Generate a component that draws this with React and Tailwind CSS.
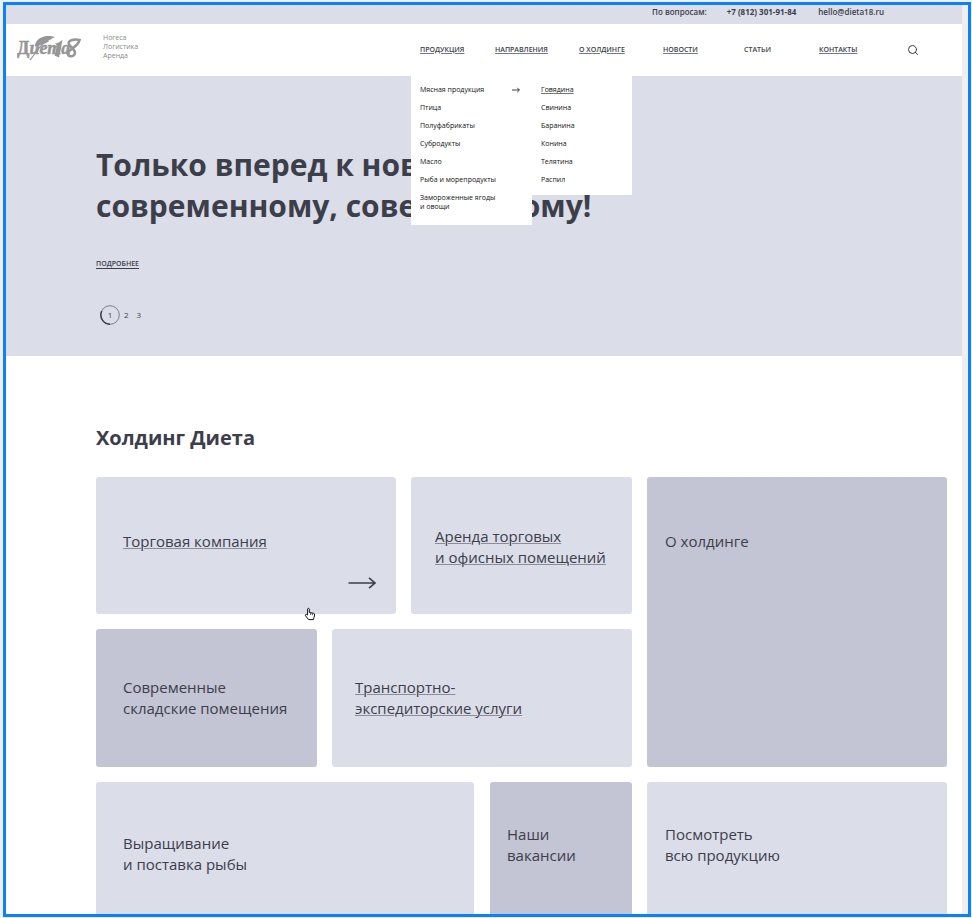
import { Search } from 'lucide-react';

const navItems = [
  { label: 'Продукция', underline: true },
  { label: 'Направления', underline: true },
  { label: 'О холдинге', underline: true },
  { label: 'Новости', underline: true },
  { label: 'Статьи', underline: false },
  { label: 'Контакты', underline: true },
];

const categories = [
  'Мясная продукция',
  'Птица',
  'Полуфабрикаты',
  'Субродукты',
  'Масло',
  'Рыба и морепродукты',
];

const meats = ['Говядина', 'Свинина', 'Баранина', 'Конина', 'Телятина', 'Распил'];

function Logo() {
  return (
    <a href="#" aria-label="Диета18" className="block">
      <svg viewBox="0 0 66 28" className="w-[66px] h-7 text-[#969696]" fill="currentColor">
        {/* Feather */}
        <path d="M18 9C19 4 24 0.5 30 0C34 -0.2 38 0.5 37.5 1.5C34 2 36 3.2 31 4.6C33.5 4.8 31 6.4 27 8L18 10.5Z" />
        <path d="M13 24C19 17 23 8 32 3" fill="none" stroke="currentColor" strokeWidth="1.2" />
        {/* Digits */}
        <path d="M38 7.5C41 7 43.5 5.5 45.5 4L42 21.5L37.5 19.5L40 9.5Z" />
        <path
          d="M62.5 4C57 2.5 50 4.5 52 8.5C54 12 60 14.5 57.5 18.5C55.5 21.5 50 20.5 51 17C52 13 61 11 62.5 4Z"
          fill="none"
          stroke="currentColor"
          strokeWidth="2.6"
        />
        <text x="0" y="18" fontSize="18" fontWeight="700" fontFamily="Liberation Serif, serif" stroke="currentColor" strokeWidth="0.5">
          Д<tspan fontStyle="italic">иета</tspan>
        </text>
      </svg>
    </a>
  );
}

function ProductMenu() {
  return (
    <div className="absolute top-full -left-[9px] z-10 flex items-start text-[7px] leading-[9px] text-[#111]">
      <ul className="w-[121px] bg-white flex flex-col gap-[9px] px-[9px] pt-[9px] pb-[14px]">
        {categories.map((name, i) => (
          <li key={name} className="flex items-center justify-between pr-[3px]">
            <a href="#" className="whitespace-nowrap">{name}</a>
            {i === 0 && (
              <svg viewBox="0 0 8 6" className="w-2 h-1.5" fill="none" stroke="currentColor" strokeWidth="0.8">
                <path d="M0 3H7.4M5.2 0.8L7.4 3L5.2 5.2" />
              </svg>
            )}
          </li>
        ))}
        <li>
          <a href="#">Замороженные ягоды<br />и овощи</a>
        </li>
      </ul>
      <ul className="w-[100px] bg-white flex flex-col gap-[9px] px-[9px] pt-[9px] pb-[11px]">
        {meats.map((name, i) => (
          <li key={name}>
            <a href="#" className={i === 0 ? 'underline decoration-[#777] underline-offset-1' : ''}>{name}</a>
          </li>
        ))}
      </ul>
    </div>
  );
}

function Header() {
  return (
    <header>
      <div className="h-[19px] bg-[#dbdde9] flex justify-end items-center pr-[78px] pb-[5px] text-[8px] leading-[10px] font-semibold">
        <span className="mr-5">По вопросам:</span>
        <a href="tel:+78123019184" className="mr-[22px] font-bold">+7 (812) 301-91-84</a>
        <a href="mailto:hello@dieta18.ru">hello@dieta18.ru</a>
      </div>
      <div className="h-[52px] bg-white flex items-center pl-[11px] pr-[43px]">
        <Logo />
        <p className="ml-5 mb-2 text-[7px] leading-[9px] font-medium text-[#8a8a8a]">
          Horeca<br />Логистика<br />Аренда
        </p>
        <nav className="ml-auto h-full grid grid-cols-[75px_84px_84px_81px_75px_88px] text-[7px] font-semibold uppercase">
          {navItems.map((item, i) => (
            <div key={item.label} className="relative h-full flex items-center">
              <a href="#" className={item.underline ? 'underline decoration-[#777985] underline-offset-1' : ''}>{item.label}</a>
              {i === 0 && <div className="normal-case font-medium"><ProductMenu /></div>}
            </div>
          ))}
        </nav>
        <button aria-label="Поиск">
          <Search size={12} strokeWidth={2} />
        </button>
      </div>
    </header>
  );
}

function Hero() {
  return (
    <section className="bg-[#dbdde9] h-[280px] pl-[90px] pt-[68px]">
      <h1 className="text-[30px] leading-[41px] font-bold">
        Только вперед к новому,<br />современному, совершенному!
      </h1>
      <a href="#" className="mt-[33px] inline-block border-b border-current text-[7px] leading-[9px] font-semibold uppercase">
        Подробнее
      </a>
      <div className="mt-[33px] ml-1 flex items-center text-[8px]">
        <button className="relative w-5 h-5 mr-1">
          <svg viewBox="0 0 20 20" className="absolute inset-0 w-5 h-5" fill="none" stroke="currentColor">
            <circle cx="10" cy="10" r="9.3" strokeWidth="0.6" />
            <path d="M1.8 6A9.2 9.2 0 0 0 10 19.2" strokeWidth="1.4" />
          </svg>
          1
        </button>
        <button className="mr-2">2</button>
        <button>3</button>
      </div>
    </section>
  );
}

function Card({ className, underline, children }) {
  return (
    <a href="#" className={`relative block rounded-[3px] text-[15px] leading-[21px] ${className}`}>
      <span className={underline ? 'underline decoration-1 decoration-[#8b8d99] underline-offset-1' : ''}>{children}</span>
    </a>
  );
}

function HandCursor() {
  return (
    <svg viewBox="0 0 12 14" className="absolute z-10 right-20 -bottom-[7px] w-3 h-3.5">
      <path
        d="M3.6 8V2.2C3.6 1 5.3 1 5.3 2.2V5.4L9.6 6.3C10.4 6.5 10.7 7 10.6 8L10 10.6L9.4 12.6H4.6L1.4 8.6C1 7.6 2 7 2.8 7.6Z"
        fill="#fff"
        stroke="#111"
      />
      <path d="M6.6 6V8M8.4 6.4V8.2" stroke="#111" strokeWidth="0.7" />
    </svg>
  );
}

function Holding() {
  return (
    <section className="bg-white pl-[90px] pr-[15px] pt-[67px]">
      <h2 className="text-[20px] leading-[30px] font-bold">Холдинг Диета</h2>
      <div className="mt-6 grid grid-cols-[536fr_300fr] gap-[15px]">
        <div className="flex flex-col gap-[15px]">
          <div className="grid grid-cols-[300fr_221fr] gap-[15px] min-h-[137px]">
            <div className="relative grid">
              <Card className="bg-[#dbdde9] pl-[27px] pt-[54px]" underline>Торговая компания</Card>
              <svg viewBox="0 0 28 12" className="absolute right-5 bottom-[25px] w-7 h-3" fill="none" stroke="currentColor" strokeWidth="1.6">
                <path d="M0.5 6H27M21 0.8L27 6L21 11.2" />
              </svg>
              <HandCursor />
            </div>
            <Card className="bg-[#dbdde9] pl-[24px] pt-[49px]" underline>Аренда торговых<br />и офисных помещений</Card>
          </div>
          <div className="grid grid-cols-[221fr_300fr] gap-[15px] min-h-[138px]">
            <Card className="bg-[#c3c4d4] pl-[27px] pt-[48px]">Современные<br />складские помещения</Card>
            <Card className="bg-[#dbdde9] pl-[23px] pt-[48px]" underline>Транспортно-<br />экспедиторские услуги</Card>
          </div>
        </div>
        <Card className="bg-[#c3c4d4] pl-[18px] pt-[54px]">О холдинге</Card>
        <div className="grid grid-cols-[378fr_142fr] gap-4 min-h-[132px]">
          <Card className="bg-[#dbdde9] rounded-b-none pl-[27px] pt-[51px]">Выращивание<br />и поставка рыбы</Card>
          <Card className="bg-[#c3c4d4] rounded-b-none pl-[17px] pt-[42px]">Наши<br />вакансии</Card>
        </div>
        <Card className="bg-[#dbdde9] rounded-b-none pl-[18px] pt-[42px]">Посмотреть<br />всю продукцию</Card>
      </div>
    </section>
  );
}

export default function App() {
  return (
    <div className="bg-[#efeff0] pt-0.5 pl-[3px] pr-px pb-px font-['Open_Sans','Noto_Sans',sans-serif] text-[#3c3e4a]">
      <div className="border-[3px] border-[#0d80ff] pr-1.5">
        <Header />
        <Hero />
        <Holding />
      </div>
    </div>
  );
}
